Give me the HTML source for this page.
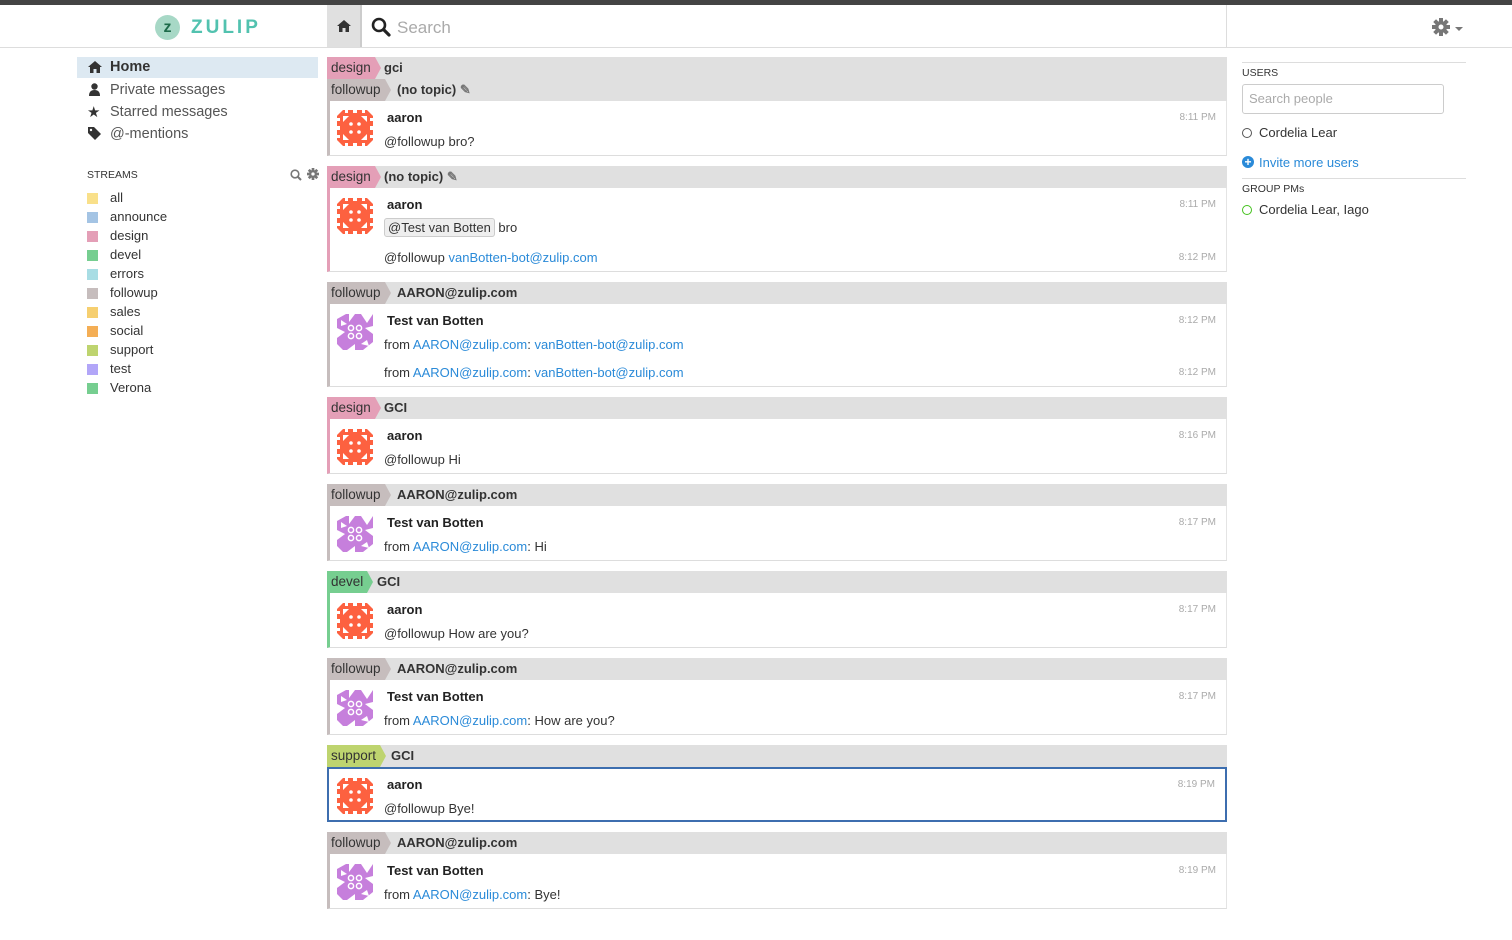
<!DOCTYPE html>
<html><head><meta charset="utf-8"><style>
*{box-sizing:border-box;margin:0;padding:0}
body{width:1512px;height:940px;background:#fff;font-family:"Liberation Sans",sans-serif;font-size:13px;color:#333;position:relative;overflow:hidden}
.a{position:absolute}
.top{left:0;top:0;width:1512px;height:5px;background:#444}
.hdr{left:0;top:5px;width:1512px;height:43px;border-bottom:1px solid #ddd}
.bar{position:absolute;left:327px;width:900px;height:22px;background:#e0e0e0}
.st{position:absolute;left:0;top:0;height:22px;line-height:22px;padding:0 4px;font-size:13.5px;color:#333}
.st:after{content:"";position:absolute;right:-6px;top:0;border-left:6px solid;border-left-color:inherit;border-top:11px solid transparent;border-bottom:11px solid transparent}
.tp{position:absolute;top:0;line-height:22px;font-weight:bold;font-size:13px;color:#333}
.msg{position:absolute;left:327px;width:900px;background:#fff;border-left:3px solid;border-right:1px solid #e4e4e4;border-bottom:1px solid #ddd}
.av{position:absolute;left:7px;width:36px;height:36px}
.sn{position:absolute;left:57px;font-weight:bold;font-size:13px;color:#222}
.ct{position:absolute;left:54px;font-size:13px;color:#333}
.tm{position:absolute;right:10px;font-size:10px;color:#aaa}
a{color:#2a8ad8;text-decoration:none}
.side{left:87px;font-size:14.5px;color:#555}
.sq{position:absolute;left:87px;width:11px;height:11px}
.sl{position:absolute;left:110px;font-size:13px;color:#333}
</style></head><body>
<svg width="0" height="0" style="position:absolute">
<defs>
<symbol id="o" viewBox="0 0 36 36">
<rect x="0" y="0" width="36" height="36" fill="#fd6140"/>
<g fill="#fff">
<polygon points="0,0 6,0 0,6"/><polygon points="36,0 30,0 36,6"/><polygon points="0,36 6,36 0,30"/><polygon points="36,36 30,36 36,30"/>
<rect x="8" y="0" width="3" height="3"/><rect x="16" y="0" width="4" height="3"/><rect x="25" y="0" width="3" height="3"/>
<rect x="8" y="33" width="3" height="3"/><rect x="16" y="33" width="4" height="3"/><rect x="25" y="33" width="3" height="3"/>
<rect x="0" y="8" width="3" height="3"/><rect x="0" y="16" width="3" height="4"/><rect x="0" y="25" width="3" height="3"/>
<rect x="33" y="8" width="3" height="3"/><rect x="33" y="16" width="3" height="4"/><rect x="33" y="25" width="3" height="3"/>
<polygon points="6,6 12,6 6,12"/><polygon points="30,6 24,6 30,12"/><polygon points="6,30 12,30 6,24"/><polygon points="30,30 24,30 30,24"/>
<circle cx="14" cy="14" r="1.8"/><circle cx="22" cy="14" r="1.8"/><circle cx="14" cy="22" r="1.8"/><circle cx="22" cy="22" r="1.8"/>
</g></symbol>
<symbol id="p" viewBox="0 0 36 36"><rect width="36" height="36" fill="#c67fdc"/>
<g fill="#fff">
<polygon points="0,0 9,0 0,5"/><polygon points="12,0 18,0 12,8"/><polygon points="24,0 36,0 30,9"/><polygon points="36,12 28,14 36,20"/>
<polygon points="0,14 8,18 0,24"/><polygon points="0,30 6,36 0,36"/><polygon points="10,36 18,30 18,36"/><polygon points="26,36 36,28 36,36"/>
<polygon points="4,6 10,10 4,12"/><polygon points="30,26 24,30 32,32"/>
<circle cx="14" cy="14" r="2.6" fill="none" stroke="#fff" stroke-width="1.5"/><circle cx="22" cy="14" r="2.6" fill="none" stroke="#fff" stroke-width="1.5"/>
<circle cx="14" cy="22" r="2.6" fill="none" stroke="#fff" stroke-width="1.5"/><circle cx="22" cy="22" r="2.6" fill="none" stroke="#fff" stroke-width="1.5"/>
</g></symbol>
</defs></svg>

<div class="a top"></div>
<div class="a hdr"></div>
<div class="a" style="left:155px;top:15px;width:25px;height:25px;border-radius:50%;background:#a7d8c6;color:#1d6b4a;font-weight:bold;font-size:16px;text-align:center;line-height:25px">z</div>
<div class="a" style="left:191px;top:17px;font-size:19px;font-weight:bold;letter-spacing:3px;color:#52c2af">ZULIP</div>
<div class="a" style="left:327px;top:5px;width:35px;height:42px;background:#e0e0e0;border-right:2px solid #ccc"></div>
<svg class="a" style="left:337px;top:20px" width="14" height="12" viewBox="0 0 14 12"><path d="M7 0 L14 6 L12 6 L12 12 L8.5 12 L8.5 8 L5.5 8 L5.5 12 L2 12 L2 6 L0 6 Z" fill="#333"/></svg>
<svg class="a" style="left:371px;top:17px" width="20" height="20" viewBox="0 0 20 20"><circle cx="8" cy="8" r="6" fill="none" stroke="#222" stroke-width="2.6"/><path d="M12.5 12.5 L18 18" stroke="#222" stroke-width="3.2" stroke-linecap="round"/></svg>
<div class="a" style="left:397px;top:18px;font-size:17px;color:#aaa">Search</div>
<div class="a" style="left:1226px;top:5px;width:1px;height:42px;background:#ddd"></div>
<svg class="a" style="left:1432px;top:18px" width="18" height="18" viewBox="0 0 18 18"><g fill="#777"><circle cx="9" cy="9" r="6"/><rect x="7" y="0" width="4" height="18"/><rect x="0" y="7" width="18" height="4"/><rect x="7" y="0" width="4" height="18" transform="rotate(45 9 9)"/><rect x="7" y="0" width="4" height="18" transform="rotate(-45 9 9)"/></g><circle cx="9" cy="9" r="2.5" fill="#fff"/></svg>
<div class="a" style="left:1455px;top:27px;border-left:4px solid transparent;border-right:4px solid transparent;border-top:4px solid #777"></div>

<!-- left sidebar -->
<div class="a" style="left:77px;top:57px;width:241px;height:21px;background:#dde9f2"></div>
<svg class="a" style="left:88px;top:61px" width="14" height="12" viewBox="0 0 14 12"><path d="M7 0 L14 6 L12 6 L12 12 L8.5 12 L8.5 8 L5.5 8 L5.5 12 L2 12 L2 6 L0 6 Z" fill="#333"/></svg>
<div class="a side" style="left:110px;top:59px;font-weight:bold;color:#333">Home</div>
<svg class="a" style="left:89px;top:83px" width="11" height="13" viewBox="0 0 11 13"><circle cx="5.5" cy="3.5" r="3.2" fill="#333"/><path d="M0 13 Q0 7 5.5 7 Q11 7 11 13Z" fill="#333"/></svg>
<div class="a side" style="left:110px;top:82px">Private messages</div>
<div class="a" style="left:87px;top:103px;font-size:15px;color:#333">&#9733;</div>
<div class="a side" style="left:110px;top:104px">Starred messages</div>
<svg class="a" style="left:88px;top:127px" width="13" height="13" viewBox="0 0 13 13"><path d="M0 0 L6 0 L13 7 L7 13 L0 6Z" fill="#333"/><circle cx="3" cy="3" r="1.2" fill="#fff"/></svg>
<div class="a side" style="left:110px;top:126px">@-mentions</div>

<div class="a" style="left:87px;top:169px;font-size:10.5px;color:#333">STREAMS</div>
<svg class="a" style="left:290px;top:169px" width="12" height="12" viewBox="0 0 12 12"><circle cx="5" cy="5" r="3.8" fill="none" stroke="#777" stroke-width="1.6"/><path d="M8 8 L11 11" stroke="#777" stroke-width="2"/></svg>
<svg class="a" style="left:307px;top:168px" width="12" height="12" viewBox="0 0 18 18"><g fill="#777"><circle cx="9" cy="9" r="6"/><rect x="7" y="0" width="4" height="18"/><rect x="0" y="7" width="18" height="4"/><rect x="7" y="0" width="4" height="18" transform="rotate(45 9 9)"/><rect x="7" y="0" width="4" height="18" transform="rotate(-45 9 9)"/></g><circle cx="9" cy="9" r="2.5" fill="#fff"/></svg>

<div class="sq" style="top:193px;background:#f9e08a"></div><div class="sl" style="top:190px">all</div>
<div class="sq" style="top:212px;background:#a4c4e4"></div><div class="sl" style="top:209px">announce</div>
<div class="sq" style="top:231px;background:#e49fb7"></div><div class="sl" style="top:228px">design</div>
<div class="sq" style="top:250px;background:#76ce90"></div><div class="sl" style="top:247px">devel</div>
<div class="sq" style="top:269px;background:#a8dde4"></div><div class="sl" style="top:266px">errors</div>
<div class="sq" style="top:288px;background:#c6bdbd"></div><div class="sl" style="top:285px">followup</div>
<div class="sq" style="top:307px;background:#f6cf70"></div><div class="sl" style="top:304px">sales</div>
<div class="sq" style="top:326px;background:#f4ae55"></div><div class="sl" style="top:323px">social</div>
<div class="sq" style="top:345px;background:#bed46f"></div><div class="sl" style="top:342px">support</div>
<div class="sq" style="top:364px;background:#b2a6f8"></div><div class="sl" style="top:361px">test</div>
<div class="sq" style="top:383px;background:#76ce90"></div><div class="sl" style="top:380px">Verona</div>

<!-- right sidebar -->
<div class="a" style="left:1242px;top:62px;width:224px;height:1px;background:#ddd"></div>
<div class="a" style="left:1242px;top:67px;font-size:10.5px;color:#333">USERS</div>
<div class="a" style="left:1242px;top:84px;width:202px;height:30px;border:1px solid #ccc;border-radius:3px;padding:6px;font-size:13px;color:#aaa">Search people</div>
<div class="a" style="left:1242px;top:128px;width:10px;height:10px;border:1px solid #555;border-radius:50%"></div>
<div class="a" style="left:1259px;top:125px;font-size:13px;color:#333">Cordelia Lear</div>
<div class="a" style="left:1242px;top:156px;width:12px;height:12px;border-radius:50%;background:#2a8ad8;color:#fff;font-size:12px;font-weight:bold;line-height:12px;text-align:center">+</div>
<div class="a" style="left:1259px;top:155px;font-size:13px;color:#2a8ad8">Invite more users</div>
<div class="a" style="left:1242px;top:178px;width:224px;height:1px;background:#ddd"></div>
<div class="a" style="left:1242px;top:183px;font-size:10.5px;color:#333">GROUP PMs</div>
<div class="a" style="left:1242px;top:205px;width:10px;height:10px;border:1px solid #44c21d;border-radius:50%"></div>
<div class="a" style="left:1259px;top:202px;font-size:13px;color:#333">Cordelia Lear, Iago</div>

<!-- Block 1 -->
<div class="bar" style="top:57px"><div class="st" style="background:#e49fb7;border-left-color:#e49fb7">design</div><div class="tp" style="left:57px">gci</div></div>
<div class="bar" style="top:79px"><div class="st" style="background:#c6bdbd;border-left-color:#c6bdbd">followup</div><div class="tp" style="left:70px">(no topic) <span style="color:#777">&#9998;</span></div></div>
<div class="msg" style="top:101px;height:55px;border-left-color:#c6bdbd">
<svg class="av" style="top:9px"><use href="#o" width="36" height="36"/></svg><div class="sn" style="top:9px">aaron</div><div class="tm" style="top:11px">8:11 PM</div><div class="ct" style="top:33px">@followup bro?</div></div>

<!-- Block 2 -->
<div class="bar" style="top:166px"><div class="st" style="background:#e49fb7;border-left-color:#e49fb7">design</div><div class="tp" style="left:57px">(no topic) <span style="color:#777">&#9998;</span></div></div>
<div class="msg" style="top:188px;height:84px;border-left-color:#e49fb7">
<svg class="av" style="top:10px"><use href="#o" width="36" height="36"/></svg><div class="sn" style="top:9px">aaron</div><div class="tm" style="top:11px">8:11 PM</div>
<div class="ct" style="top:32px"><span style="background:#eee;border:1px solid #ccc;border-radius:3px;padding:1px 3px">@Test van Botten</span> bro</div>
<div class="ct" style="top:62px">@followup <a>vanBotten-bot@zulip.com</a></div><div class="tm" style="top:64px">8:12 PM</div></div>

<!-- Block 3 -->
<div class="bar" style="top:282px"><div class="st" style="background:#c6bdbd;border-left-color:#c6bdbd">followup</div><div class="tp" style="left:70px">AARON@zulip.com</div></div>
<div class="msg" style="top:304px;height:83px;border-left-color:#c6bdbd">
<svg class="av" style="top:10px"><use href="#p" width="36" height="36"/></svg><div class="sn" style="top:9px">Test van Botten</div><div class="tm" style="top:11px">8:12 PM</div>
<div class="ct" style="top:33px">from <a>AARON@zulip.com</a>: <a>vanBotten-bot@zulip.com</a></div>
<div class="ct" style="top:61px">from <a>AARON@zulip.com</a>: <a>vanBotten-bot@zulip.com</a></div><div class="tm" style="top:63px">8:12 PM</div></div>

<!-- Block 4 -->
<div class="bar" style="top:397px"><div class="st" style="background:#e49fb7;border-left-color:#e49fb7">design</div><div class="tp" style="left:57px">GCI</div></div>
<div class="msg" style="top:419px;height:55px;border-left-color:#e49fb7">
<svg class="av" style="top:10px"><use href="#o" width="36" height="36"/></svg><div class="sn" style="top:9px">aaron</div><div class="tm" style="top:11px">8:16 PM</div><div class="ct" style="top:33px">@followup Hi</div></div>

<!-- Block 5 -->
<div class="bar" style="top:484px"><div class="st" style="background:#c6bdbd;border-left-color:#c6bdbd">followup</div><div class="tp" style="left:70px">AARON@zulip.com</div></div>
<div class="msg" style="top:506px;height:55px;border-left-color:#c6bdbd">
<svg class="av" style="top:10px"><use href="#p" width="36" height="36"/></svg><div class="sn" style="top:9px">Test van Botten</div><div class="tm" style="top:11px">8:17 PM</div><div class="ct" style="top:33px">from <a>AARON@zulip.com</a>: Hi</div></div>

<!-- Block 6 -->
<div class="bar" style="top:571px"><div class="st" style="background:#76ce90;border-left-color:#76ce90">devel</div><div class="tp" style="left:50px">GCI</div></div>
<div class="msg" style="top:593px;height:55px;border-left-color:#76ce90">
<svg class="av" style="top:10px"><use href="#o" width="36" height="36"/></svg><div class="sn" style="top:9px">aaron</div><div class="tm" style="top:11px">8:17 PM</div><div class="ct" style="top:33px">@followup How are you?</div></div>

<!-- Block 7 -->
<div class="bar" style="top:658px"><div class="st" style="background:#c6bdbd;border-left-color:#c6bdbd">followup</div><div class="tp" style="left:70px">AARON@zulip.com</div></div>
<div class="msg" style="top:680px;height:55px;border-left-color:#c6bdbd">
<svg class="av" style="top:10px"><use href="#p" width="36" height="36"/></svg><div class="sn" style="top:9px">Test van Botten</div><div class="tm" style="top:11px">8:17 PM</div><div class="ct" style="top:33px">from <a>AARON@zulip.com</a>: How are you?</div></div>

<!-- Block 8 -->
<div class="bar" style="top:745px"><div class="st" style="background:#bed46f;border-left-color:#bed46f">support</div><div class="tp" style="left:64px">GCI</div></div>
<div class="msg" style="top:767px;height:55px;border:2px solid #3d6eaf">
<svg class="av" style="top:9px;left:8px"><use href="#o" width="36" height="36"/></svg><div class="sn" style="top:8px;left:58px">aaron</div><div class="tm" style="top:10px">8:19 PM</div><div class="ct" style="top:32px;left:55px">@followup Bye!</div></div>

<!-- Block 9 -->
<div class="bar" style="top:832px"><div class="st" style="background:#c6bdbd;border-left-color:#c6bdbd">followup</div><div class="tp" style="left:70px">AARON@zulip.com</div></div>
<div class="msg" style="top:854px;height:55px;border-left-color:#c6bdbd">
<svg class="av" style="top:10px"><use href="#p" width="36" height="36"/></svg><div class="sn" style="top:9px">Test van Botten</div><div class="tm" style="top:11px">8:19 PM</div><div class="ct" style="top:33px">from <a>AARON@zulip.com</a>: Bye!</div></div>
</body></html>
